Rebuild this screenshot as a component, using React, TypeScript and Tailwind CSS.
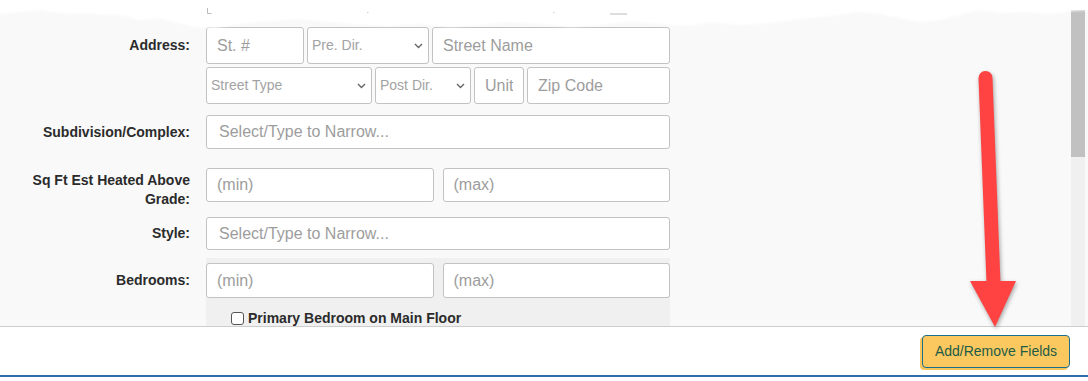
import type { ReactNode } from 'react'

function TextBox({ placeholder, className = '' }: { placeholder: string; className?: string }) {
  return (
    <input
      readOnly
      placeholder={placeholder}
      className={`bg-white border border-[#c2c2c2] rounded-[3px] px-[10px] text-[16px] text-[#333] placeholder:text-[#9d9d9d] outline-none min-w-0 ${className}`}
    />
  )
}

function SelectBox({ label, className = '' }: { label: string; className?: string }) {
  return (
    <div
      className={`relative flex items-center bg-white border border-[#c2c2c2] rounded-[3px] pl-[4px] text-[14px] text-[#a3a3a3] ${className}`}
    >
      {label}
      <svg className="absolute right-[5px] top-1/2 -translate-y-1/2" width="9" height="6" viewBox="0 0 9 6">
        <path d="M1 1l3.5 3.5L8 1" fill="none" stroke="#666" strokeWidth="1.4" />
      </svg>
    </div>
  )
}

function Label({ children, className = '' }: { children: ReactNode; className?: string }) {
  return (
    <div className={`w-[190px] shrink-0 mr-4 flex items-center justify-end text-right text-[14px] font-bold text-[#2b2b2b] ${className}`}>
      {children}
    </div>
  )
}

// torn paper edge along the top of the capture
function TornEdge() {
  const pts = [
    [1088, 10], [1070, 11], [1050, 14], [1030, 12], [1000, 13], [980, 10], [960, 15], [940, 20],
    [920, 22], [900, 18], [880, 14], [860, 12], [830, 16], [800, 19], [770, 23], [740, 25],
    [710, 22], [690, 26], [660, 24], [630, 21], [600, 25], [570, 27], [540, 24], [510, 22],
    [480, 25], [450, 27], [420, 24], [390, 26], [360, 25], [330, 22], [300, 19], [270, 21],
    [240, 24], [215, 28], [195, 27], [178, 23], [160, 18], [140, 20], [120, 15], [90, 14],
    [60, 13], [40, 10], [20, 12], [0, 14],
  ]
  const d = 'M0 0H1088' + pts.map(([x, y]) => `L${x} ${y}`).join('') + 'Z'
  return (
    <svg className="absolute top-0 left-0" width="1088" height="34" viewBox="0 0 1088 34">
      <defs>
        <filter id="soft" x="-5%" y="-50%" width="110%" height="200%">
          <feGaussianBlur stdDeviation="1.2" />
        </filter>
      </defs>
      <path d={d} fill="#fff" filter="url(#soft)" />
      <path d={d} fill="#fff" transform="translate(0,-2)" />
      <path d="M207.5 8v5.5h4" fill="none" stroke="#bbb" strokeWidth="1" />
      <path d="M367 12.5h1.5M553 12.5h1.5" stroke="#ccc" strokeWidth="1" />
      <path d="M610 14h17" stroke="#bbb" strokeWidth="1" />
    </svg>
  )
}

function Arrow() {
  return (
    <svg
      className="absolute left-[960px] top-[60px] drop-shadow-[1px_2px_2px_rgba(0,0,0,0.35)]"
      width="70"
      height="275"
      viewBox="0 0 70 275"
    >
      <path d="M25.5 18L33.5 223" stroke="#ff4242" strokeWidth="14" strokeLinecap="round" />
      <path d="M10 221H56L35 267Z" fill="#ff4242" />
    </svg>
  )
}

export default function App() {
  return (
    <div className="relative w-[1088px] h-[381px] overflow-hidden bg-white font-['Liberation_Sans',Arial,sans-serif]">
      {/* Form area */}
      <div className="h-[327px] flex bg-[#f9f9f9] border-b border-[#cdcdcd] overflow-hidden">
        <div className="flex-1 pt-[27px]">
          {/* Address */}
          <div className="flex">
            <Label className="h-[37px] self-start">Address:</Label>
            <div className="w-[464px] flex flex-col gap-[3px]">
              <div className="flex gap-[3px] h-[37px]">
                <TextBox placeholder="St. #" className="w-[98px]" />
                <SelectBox label="Pre. Dir." className="w-[122px]" />
                <TextBox placeholder="Street Name" className="w-[238px]" />
              </div>
              <div className="flex gap-[3px] h-[37px]">
                <SelectBox label="Street Type" className="w-[166px]" />
                <SelectBox label="Post Dir." className="w-[96px]" />
                <TextBox placeholder="Unit" className="w-[50px] px-[8px]" />
                <TextBox placeholder="Zip Code" className="w-[143px] px-[9px]" />
              </div>
            </div>
          </div>

          {/* Subdivision */}
          <div className="flex mt-[11px] h-[34px]">
            <Label>Subdivision/Complex:</Label>
            <TextBox placeholder="Select/Type to Narrow..." className="w-[464px] px-[12px]" />
          </div>

          {/* Sq Ft */}
          <div className="flex mt-[19px] h-[34px]">
            <Label className="self-start pt-[3px] leading-[19px]">Sq Ft Est Heated Above Grade:</Label>
            <div className="w-[464px] h-[34px] grid grid-cols-2 gap-[9px]">
              <TextBox placeholder="(min)" />
              <TextBox placeholder="(max)" />
            </div>
          </div>

          {/* Style */}
          <div className="flex mt-[15px] h-[33px]">
            <Label>Style:</Label>
            <TextBox placeholder="Select/Type to Narrow..." className="w-[464px] px-[12px]" />
          </div>

          {/* Bedrooms */}
          <div className="flex mt-[8px]">
            <Label className="self-start mt-[5px] h-[35px]">Bedrooms:</Label>
            <div className="w-[464px] bg-[#f0f0f0] pt-[5px] pb-4">
              <div className="h-[35px] grid grid-cols-2 gap-[9px]">
                <TextBox placeholder="(min)" />
                <TextBox placeholder="(max)" />
              </div>
              <div className="flex items-center mt-[12px] pl-[25px] h-[17px]">
                <span className="w-[13px] h-[13px] border border-[#555] rounded-[3px] bg-white" />
                <span className="ml-[4px] text-[14px] font-bold text-[#2b2b2b]">Primary Bedroom on Main Floor</span>
              </div>
            </div>
          </div>
        </div>

        {/* Scrollbar */}
        <div className="w-[14px] mr-[3px] mt-[10px] bg-[#f0f0f0] flex flex-col">
          <div className="h-[147px] bg-[#c1c1c1]" />
        </div>
      </div>

      {/* Footer */}
      <div className="h-[50px] flex justify-end items-start pt-[8px] pr-[18px] border-b-2 border-[#2e6cab]">
        <button className="h-[33px] w-[148px] rounded-[4px] border border-[#1a6e8e] bg-[#fac85e] text-[14px] text-[#1e5b47] shadow-[-2px_2px_0_#f5c55a]">
          Add/Remove Fields
        </button>
      </div>

      <TornEdge />
      <Arrow />
    </div>
  )
}
